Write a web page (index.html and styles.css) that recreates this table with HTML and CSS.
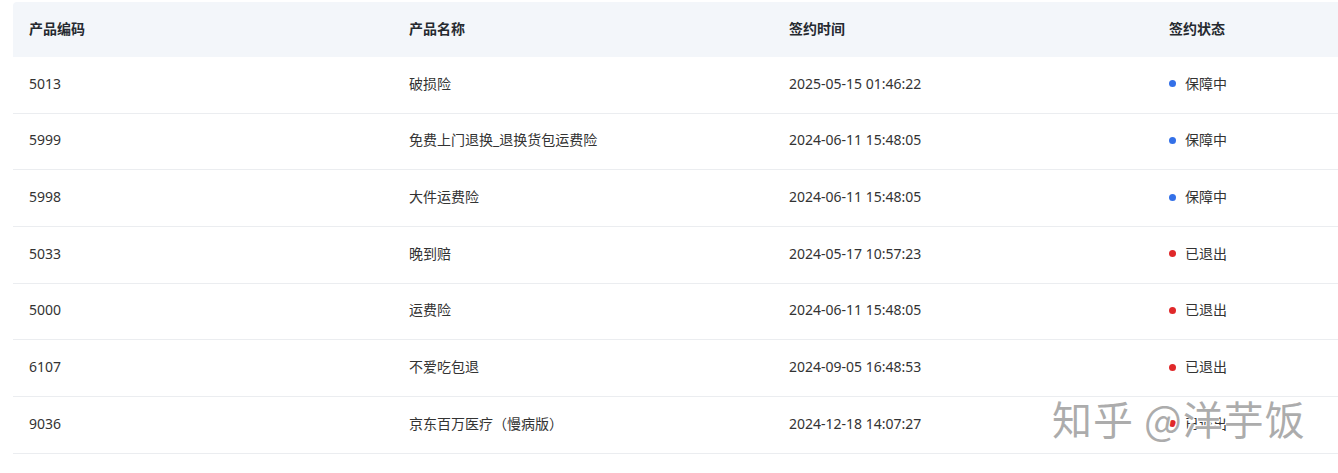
FILE: index.html
```html
<!DOCTYPE html>
<html lang="zh-CN">
<head>
<meta charset="utf-8">
<link rel="stylesheet" href="styles.css">
</head>
<body>
<div class="page">
  <div class="table">
    <div class="row head">
      <div class="cell">产品编码</div>
      <div class="cell">产品名称</div>
      <div class="cell">签约时间</div>
      <div class="cell">签约状态</div>
    </div>
    <div class="row">
      <div class="cell">5013</div>
      <div class="cell">破损险</div>
      <div class="cell">2025-05-15 01:46:22</div>
      <div class="cell"><span class="dot blue"></span>保障中</div>
    </div>
    <div class="row">
      <div class="cell">5999</div>
      <div class="cell">免费上门退换_退换货包运费险</div>
      <div class="cell">2024-06-11 15:48:05</div>
      <div class="cell"><span class="dot blue"></span>保障中</div>
    </div>
    <div class="row">
      <div class="cell">5998</div>
      <div class="cell">大件运费险</div>
      <div class="cell">2024-06-11 15:48:05</div>
      <div class="cell"><span class="dot blue"></span>保障中</div>
    </div>
    <div class="row">
      <div class="cell">5033</div>
      <div class="cell">晚到赔</div>
      <div class="cell">2024-05-17 10:57:23</div>
      <div class="cell"><span class="dot red"></span>已退出</div>
    </div>
    <div class="row">
      <div class="cell">5000</div>
      <div class="cell">运费险</div>
      <div class="cell">2024-06-11 15:48:05</div>
      <div class="cell"><span class="dot red"></span>已退出</div>
    </div>
    <div class="row">
      <div class="cell">6107</div>
      <div class="cell">不爱吃包退</div>
      <div class="cell">2024-09-05 16:48:53</div>
      <div class="cell"><span class="dot red"></span>已退出</div>
    </div>
    <div class="row">
      <div class="cell">9036</div>
      <div class="cell">京东百万医疗（慢病版）</div>
      <div class="cell">2024-12-18 14:07:27</div>
      <div class="cell"><span class="dot red"></span>已退出</div>
    </div>
  </div>
  <div class="watermark">知乎 @洋芋饭</div>
</div>
</body>
</html>
```
FILE: styles.css
```css
html, body {
  margin: 0;
  padding: 0;
  background: #fff;
  overflow: hidden;
}
body {
  font-family: "Noto Sans", "Noto Sans CJK SC", sans-serif;
  color: #333;
  font-size: 14px;
}
.page {
  position: relative;
  width: 1338px;
  height: 473px;
  overflow: hidden;
  padding: 2px 0 0 13px;
  box-sizing: border-box;
}
.table {
  display: flex;
  flex-direction: column;
  width: 1520px;
}
.row {
  display: grid;
  grid-template-columns: 380px 380px 380px 380px;
  height: 56.67px;
  border-bottom: 1px solid #ebedf0;
  align-items: center;
  padding-bottom: 2px;
  box-sizing: border-box;
}
.row.head {
  height: 55px;
  background: #f3f6fa;
  border-bottom: none;
  border-radius: 4px 0 0 0;
  font-weight: 700;
  color: #262a30;
}
.cell {
  padding-left: 16px;
  display: flex;
  align-items: center;
  line-height: 20px;
}
.dot {
  width: 7px;
  height: 7px;
  border-radius: 50%;
  margin-right: 9px;
  display: inline-block;
}
.dot.blue { background: #3370e8; }
.dot.red { background: #e0282a; }
.watermark {
  position: absolute;
  left: 1052px;
  top: 392px;
  font-family: "Noto Sans CJK SC", sans-serif;
  font-size: 40px;
  line-height: 52px;
  color: rgba(150, 150, 150, 0.78);
  text-shadow: 1px 1px 0 #fff, -1px -1px 0 #fff;
  letter-spacing: 1px;
  white-space: nowrap;
}
```
